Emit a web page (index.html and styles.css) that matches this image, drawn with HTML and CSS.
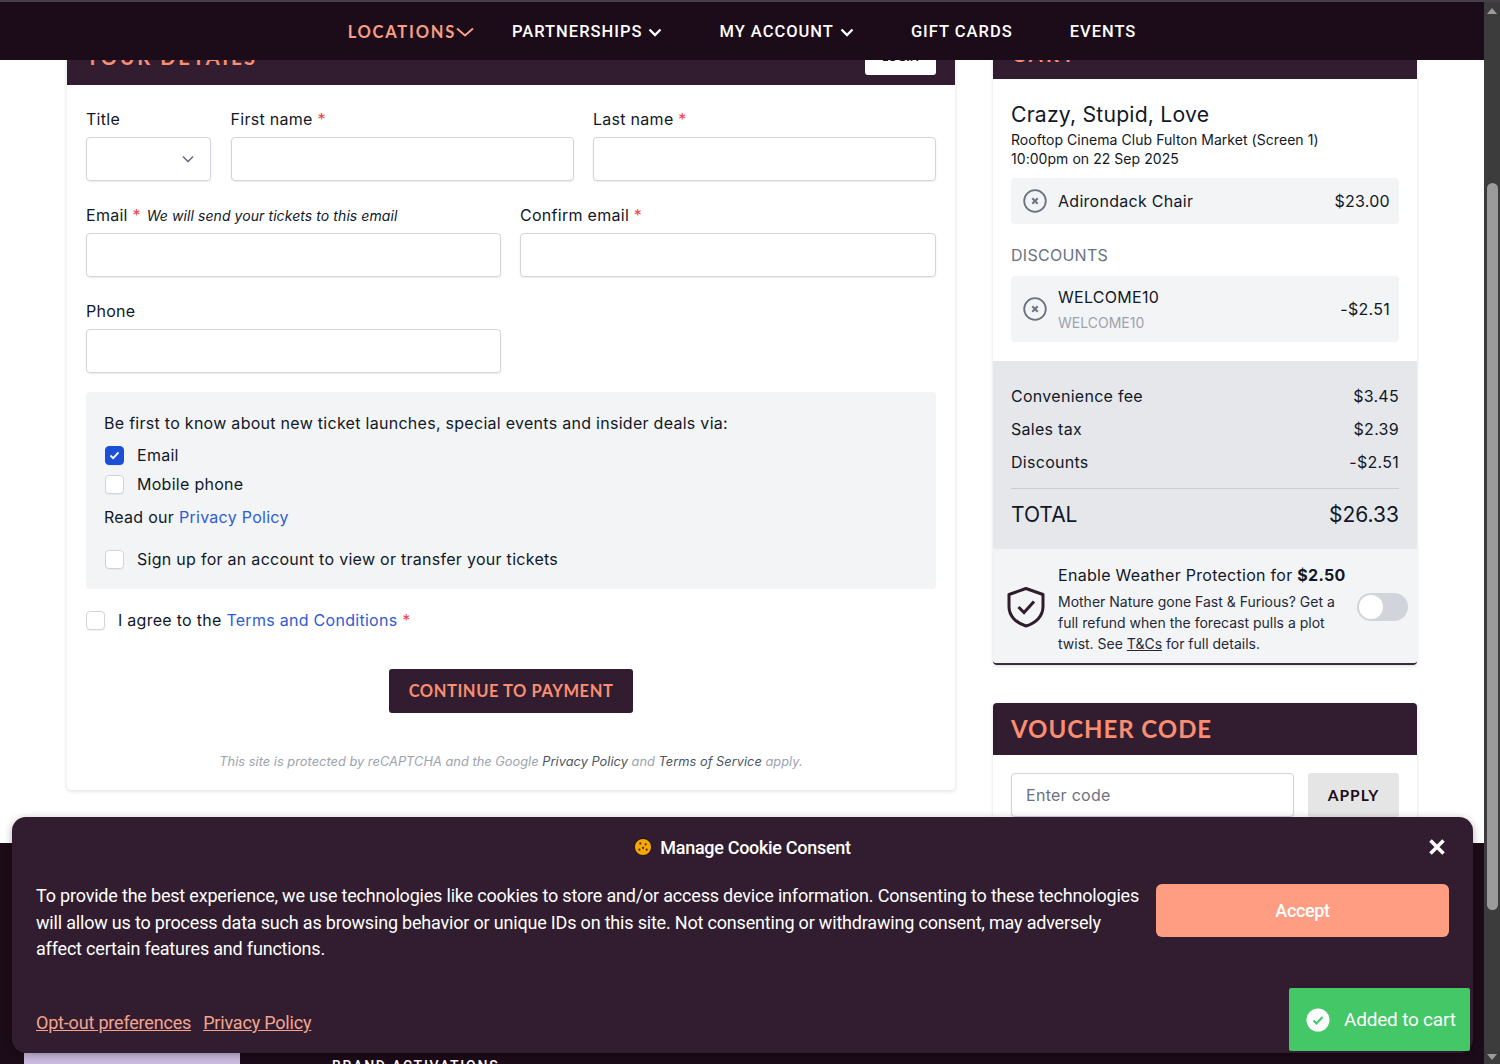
FILE: index.html
```html
<!DOCTYPE html>
<html lang="en">
<head>
<meta charset="utf-8">
<title>Checkout</title>
<link rel="stylesheet" href="styles.css">
</head>
<body>
<div class="viewport">
  <div class="page">
    <nav class="nav">
      <a class="nav-item nav-loc">LOCATIONS<svg class="chev-loc" viewBox="0 0 18 10" width="18" height="10"><path d="M1 1.500l8 7 8-7" fill="none" stroke="currentColor" stroke-width="2"/></svg></a>
      <a class="nav-item nav-part">PARTNERSHIPS<svg class="chev" viewBox="0 0 14 9" width="14" height="9"><path d="M1.500 1.500L7 7l5.500-5.500" fill="none" stroke="currentColor" stroke-width="2.400"/></svg></a>
      <a class="nav-item nav-acc">MY ACCOUNT<svg class="chev" viewBox="0 0 14 9" width="14" height="9"><path d="M1.500 1.500L7 7l5.500-5.500" fill="none" stroke="currentColor" stroke-width="2.400"/></svg></a>
      <a class="nav-item nav-gift">GIFT CARDS</a>
      <a class="nav-item">EVENTS</a>
    </nav>
    <main class="main">
      <section class="details">
        <header class="bar bar-details">
          <h2 class="bar-title bar-small">YOUR DETAILS</h2>
          <button class="login">LOGIN</button>
        </header>
        <form class="form">
          <div class="row row-names">
            <label class="field"><span class="label">Title</span><span class="select"><svg viewBox="0 0 12 8" width="12" height="8"><path d="M1 1.500l5 5 5-5" fill="none" stroke="#6b7280" stroke-width="1.600"/></svg></span></label>
            <label class="field"><span class="label">First name <em class="req">*</em></span><input class="input"></label>
            <label class="field"><span class="label">Last name <em class="req">*</em></span><input class="input"></label>
          </div>
          <div class="row row-two">
            <label class="field"><span class="label">Email <em class="req">*</em> <i class="hint">We will send your tickets to this email</i></span><input class="input"></label>
            <label class="field"><span class="label">Confirm email <em class="req">*</em></span><input class="input"></label>
          </div>
          <div class="row row-two">
            <label class="field"><span class="label">Phone</span><input class="input"></label>
          </div>
          <div class="consent">
            <p class="consent-lead">Be first to know about new ticket launches, special events and insider deals via:</p>
            <div class="check check-email"><span class="box box-on"><svg viewBox="0 0 12 10" width="11" height="9"><path d="M1.500 5l3 3 6-6.500" fill="none" stroke="#fff" stroke-width="2"/></svg></span>Email</div>
            <div class="check check-phone"><span class="box"></span>Mobile phone</div>
            <p class="read">Read our <a class="link">Privacy Policy</a></p>
            <div class="check check-sign"><span class="box"></span>Sign up for an account to view or transfer your tickets</div>
          </div>
          <div class="check terms"><span class="box"></span>I agree to the&nbsp;<a class="link">Terms and Conditions</a>&nbsp;<em class="req">*</em></div>
          <button class="continue" type="button">CONTINUE TO PAYMENT</button>
          <p class="captcha">This site is protected by reCAPTCHA and the Google <b>Privacy Policy</b> and <b>Terms of Service</b> apply.</p>
        </form>
      </section>
      <aside class="side">
        <section class="cart">
          <header class="bar"><h2 class="bar-title bar-small bar-cart">CART</h2></header>
          <div class="cart-body">
            <h3 class="film">Crazy, Stupid, Love</h3>
            <p class="venue">Rooftop Cinema Club Fulton Market (Screen 1)<br>10:00pm on 22 Sep 2025</p>
            <div class="line line-item">
              <svg class="remove" viewBox="0 0 24 24" width="24" height="24"><circle cx="12" cy="12" r="10.800" fill="none" stroke="#6b7280" stroke-width="1.800"/><path d="M9.300 9.300l5.400 5.400m0-5.400l-5.400 5.400" stroke="#6b7280" stroke-width="2"/></svg>
              <span class="line-name">Adirondack Chair</span><span>$23.00</span>
            </div>
            <h4 class="disc-title">DISCOUNTS</h4>
            <div class="line line-disc">
              <svg class="remove" viewBox="0 0 24 24" width="24" height="24"><circle cx="12" cy="12" r="10.800" fill="none" stroke="#6b7280" stroke-width="1.800"/><path d="M9.300 9.300l5.400 5.400m0-5.400l-5.400 5.400" stroke="#6b7280" stroke-width="2"/></svg>
              <span class="line-name line-name-disc">WELCOME10<small class="code">WELCOME10</small></span><span>-$2.51</span>
            </div>
          </div>
          <div class="summary">
            <div class="sum-row"><span>Convenience fee</span><span>$3.45</span></div>
            <div class="sum-row"><span>Sales tax</span><span>$2.39</span></div>
            <div class="sum-row"><span>Discounts</span><span>-$2.51</span></div>
            <div class="sum-total"><span>TOTAL</span><span class="total-val">$26.33</span></div>
          </div>
          <div class="weather">
            <svg class="shield" viewBox="0 0 40 42" width="40" height="42"><path d="M20 2.500l17 6v12c0 9.500-7 16.500-17 19.500C10 37 3 30 3 20.500v-12z" fill="none" stroke="#2f1c2d" stroke-width="3" stroke-linejoin="round"/><path d="M12.500 21l5.500 5.500 10-11" fill="none" stroke="#2f1c2d" stroke-width="3"/></svg>
            <div class="weather-text">
              <p class="weather-head">Enable Weather Protection for <b>$2.50</b></p>
              <p class="weather-copy">Mother Nature gone Fast &amp; Furious? Get a full refund when the forecast pulls a plot twist. See <u>T&amp;Cs</u> for full details.</p>
            </div>
            <span class="toggle"><span class="knob"></span></span>
          </div>
        </section>
        <section class="voucher">
          <header class="bar bar-voucher"><h2 class="bar-title">VOUCHER CODE</h2></header>
          <div class="voucher-body">
            <input class="input voucher-input" placeholder="Enter code">
            <button class="apply" type="button">APPLY</button>
          </div>
        </section>
      </aside>
    </main>
    <footer class="footer">
      <div class="foot-block"></div>
      <div class="foot-link">BRAND ACTIVATIONS</div>
    </footer>
    <div class="cookie">
      <div class="cookie-head">
        <svg viewBox="0 0 20 20" width="18" height="18"><circle cx="10" cy="10" r="9.500" fill="#f5a800" stroke="#1c0b18" stroke-width="1"/><g fill="#4a2a10"><circle cx="7" cy="6" r="1.200"/><circle cx="13" cy="7" r="1.200"/><circle cx="10" cy="11" r="1.200"/><circle cx="6" cy="13" r="1.200"/><circle cx="14" cy="13" r="1.200"/></g></svg>
        <span>Manage Cookie Consent</span>
        <svg class="cookie-close" viewBox="0 0 18 18" width="18" height="18"><path d="M2.500 2.500l13 13m0-13l-13 13" stroke="#fff" stroke-width="3.600"/></svg>
      </div>
      <div class="cookie-mid">
        <p class="cookie-text">To provide the best experience, we use technologies like cookies to store and/or access device information. Consenting to these technologies will allow us to process data such as browsing behavior or unique IDs on this site. Not consenting or withdrawing consent, may adversely affect certain features and functions.</p>
        <button class="accept" type="button">Accept</button>
      </div>
      <div class="cookie-links"><a>Opt-out preferences</a><a>Privacy Policy</a></div>
    </div>
    <div class="toast">
      <svg viewBox="0 0 24 24" width="24" height="24"><circle cx="12" cy="12" r="11.500" fill="#fff"/><path d="M7.500 12.500l3 3 6-6.500" fill="none" stroke="#43c767" stroke-width="2"/></svg>
      <span>Added to cart</span>
    </div>
  </div>
  <div class="scrollbar">
    <span class="arrow-up"></span>
    <span class="thumb"></span>
    <span class="arrow-down"></span>
  </div>
</div>
</body>
</html>
```
FILE: styles.css
```css
* { box-sizing: border-box; }
html, body { margin: 0; height: 100%; overflow: hidden; }
body { font-family: Inter, "Liberation Sans", sans-serif; color: #111827; background: #fff; font-size: 16px; letter-spacing: .28px; }
p, h2, h3, h4 { margin: 0; font-weight: 400; }
em, i { font-style: normal; }
.viewport { display: flex; width: 1500px; height: 1064px; overflow: hidden; }
.page { position: relative; width: 1484px; height: 1064px; overflow: hidden; background: #fff; }

.nav { position: absolute; top: 0; left: 0; right: 0; height: 60px; z-index: 5; background: #1c0b18; border-top: 2px solid #45404a; display: flex; align-items: center; justify-content: center; padding-top: 2px; font: 500 16.500px/24px Roboto, sans-serif; letter-spacing: 1px; color: #fff; }
.nav-item { display: flex; align-items: center; margin-left: 57px; white-space: nowrap; }
.nav-item:first-child { margin-left: 0; }
.nav-loc { color: #f79f86; font-family: Lato, sans-serif; font-weight: 700; letter-spacing: 1.750px; }
.nav-part { margin-left: 38px; }
.chev { margin-left: 6px; }
.chev-loc { margin-left: 0; }

.main { display: flex; align-items: flex-start; gap: 38px; padding: 27px 67px 0; height: 843px; }
.bar { background: #311d2f; height: 52px; display: flex; align-items: center; justify-content: space-between; padding: 0 18px; }
.bar-title { font: 700 24px/1 Lato, sans-serif; letter-spacing: .95px; color: #fb8e72; }
.bar-small { font-size: 20px; letter-spacing: 2.700px; padding-bottom: 5px; margin-left: 1px; }
.bar-cart { padding: 2px 0 0; letter-spacing: 3.500px; }
.details { width: 888px; margin-top: 6px; background: #fff; box-shadow: 0 1px 4px rgba(0,0,0,.14); border-radius: 0 0 4px 4px; }
.login { width: 71px; height: 34px; border: 0; border-radius: 3px; background: #fff; font: 700 12px Lato, sans-serif; color: #111; padding: 0 0 3px; margin: 8px 1px 2px 0; align-self: flex-start; }
.form { padding: 22px 19px 0; height: 705px; display: flex; flex-direction: column; }
.row { display: grid; gap: 19px; margin-bottom: 22px; }
.row-names { grid-template-columns: 125.500px 343.500px 343px; }
.row-two { grid-template-columns: 415px 416px; }
.field { display: flex; flex-direction: column; gap: 6px; }
.label { height: 24px; font-size: 16px; line-height: 24px; color: #111827; white-space: nowrap; }
.req { color: #ef4444; }
.hint { font-style: italic; font-size: 14px; letter-spacing: .08px; margin-left: 1px; }
.input, .select { width: 100%; height: 44px; border: 1px solid #d1d5db; border-radius: 4px; background: #fff; box-shadow: 0 1px 2px rgba(0,0,0,.08); font: 16px Inter, sans-serif; letter-spacing: .28px; padding: 0 14px; outline: 0; }
.select { width: 125px; display: flex; align-items: center; justify-content: flex-end; padding-right: 16px; }
.consent { margin-top: -3px; width: 850px; height: 197px; background: #f3f4f6; border-radius: 4px; padding: 19px 18px 0; }
.consent-lead { line-height: 24px; }
.check { display: flex; align-items: center; height: 24px; line-height: 24px; }
.box { width: 19px; height: 19px; border: 1px solid #d1d5db; background: #fff; border-radius: 4px; margin-right: 13px; flex: none; display: flex; align-items: center; justify-content: center; box-shadow: 0 1px 1px rgba(0,0,0,.05); }
.consent .box { margin-left: 1px; }
.box-on { background: #1d4ed8; border-color: #1d4ed8; }
.check-email { margin-top: 8px; }
.check-phone { margin-top: 5px; }
.read { margin-top: 9px; line-height: 24px; }
.link { color: #2f5bd8; }
.check-sign { margin-top: 18px; }
.terms { margin-top: 19px; }
.continue { align-self: center; margin-top: 37px; width: 244px; height: 44px; border: 0; border-radius: 3px; background: #311d2f; color: #fb8e72; font: 700 16.500px Lato, sans-serif; letter-spacing: .55px; }
.captcha { margin-top: 40px; text-align: center; font-size: 12.800px; line-height: 18px; font-style: italic; color: #9ca3af; letter-spacing: .03px; }
.captcha b { font-weight: 400; color: #4b5563; }

.side { width: 424px; }
.cart { background: #fff; box-shadow: 0 1px 3px rgba(0,0,0,.14); }
.cart-body { padding: 22px 18px 19px; }
.film { font-size: 21.200px; line-height: 26px; letter-spacing: .2px; }
.venue { font-size: 14px; line-height: 18.500px; margin-top: 4px; letter-spacing: .05px; }
.line { display: flex; align-items: center; background: #f3f4f6; border-radius: 4px; padding: 0 9px 0 12px; }
.line-item { height: 46px; margin-top: 10px; }
.line-disc { height: 66px; }
.remove { flex: none; margin-right: 11px; }
.line-name { flex: 1; }
.line-name-disc { padding-top: 2px; }
.code { display: block; font-size: 14px; line-height: 20px; color: #9ca3af; margin-top: 6px; letter-spacing: 0; }
.disc-title { font-size: 16px; line-height: 24px; color: #6b7280; margin: 19px 0 9px; }
.summary { background: #e5e7eb; height: 188px; padding: 19px 18px 0; }
.sum-row { display: flex; justify-content: space-between; height: 33px; line-height: 33px; font-size: 16px; }
.sum-total { display: flex; justify-content: space-between; margin-top: 9px; border-top: 1px solid #c9ccd2; padding-top: 12px; font-size: 21px; line-height: 28px; letter-spacing: 0; }
.weather { display: flex; align-items: center; height: 116px; background: #f3f4f6; border-bottom: 2px solid #3b2a39; padding: 2px 9px 0 13px; border-radius: 0 0 4px 4px; }
.shield { flex: none; margin: 0 12px 0 0; }
.weather-text { width: 285px; flex: none; padding-top: 2px; }
.weather-head { font-size: 16px; line-height: 24px; white-space: nowrap; }
.weather-head b { font-weight: 700; }
.weather-copy { font-size: 14px; line-height: 21px; color: #1f2937; margin-top: 4px; letter-spacing: 0; }
.toggle { width: 51px; height: 28px; border-radius: 14px; background: #d1d5db; margin-left: 14px; padding: 2px; flex: none; }
.knob { display: block; width: 24px; height: 24px; border-radius: 50%; background: #fff; }
.voucher { margin-top: 38px; background: #fff; box-shadow: 0 1px 3px rgba(0,0,0,.14); }
.bar-voucher { border-radius: 4px 4px 0 0; }
.voucher-body { display: flex; gap: 14px; padding: 18px; }
.voucher-input { width: 283px; }
.voucher-input::placeholder { color: #6b7280; }
.apply { width: 91px; height: 44px; border: 0; border-radius: 3px; background: #e5e5e5; color: #1c0b18; font: 700 15.500px Lato, sans-serif; letter-spacing: 1px; }

.footer { position: relative; height: 221px; background: #1c0b18; padding: 210px 0 0 24px; display: flex; }
.foot-block { width: 216px; height: 11px; background: #cbbbe0; flex: none; }
.foot-link { margin: 4px 0 0 92px; font: 500 14px/18px Roboto, sans-serif; letter-spacing: 1.750px; color: #fff; }

.cookie { position: absolute; z-index: 6; left: 12px; top: 817px; width: 1461px; height: 236px; border-radius: 14px; background: #311d2f; box-shadow: 0 2px 8px rgba(0,0,0,.3); color: #fff; font-family: Roboto, sans-serif; padding: 18px 24px 0; letter-spacing: -.19px; }
.cookie-head { position: relative; display: flex; align-items: center; justify-content: center; gap: 8px; height: 24px; font-size: 18px; font-weight: 500; letter-spacing: -.3px; }
.cookie-close { position: absolute; right: 3px; top: 3px; }
.cookie-mid { display: flex; align-items: flex-start; gap: 16px; margin-top: 25px; }
.cookie-text { width: 1104px; flex: none; font-size: 18px; line-height: 26.500px; margin-top: -1px; }
.accept { width: 293px; height: 53px; border: 0; border-radius: 6px; background: #ff9d82; color: #fff; font: 500 18px Roboto, sans-serif; letter-spacing: -.35px; }
.cookie-links { position: absolute; left: 24px; top: 194px; display: flex; gap: 12px; font-size: 18px; line-height: 24px; color: #f3a48e; text-decoration: underline; }
.toast { position: absolute; z-index: 7; left: 1289px; top: 988px; width: 181px; height: 63px; background: #43c767; border-radius: 2px; color: #fff; display: flex; align-items: center; gap: 14px; padding-left: 17px; font: 400 19px Roboto, sans-serif; letter-spacing: -.2px; white-space: nowrap; }

.scrollbar { width: 16px; height: 1064px; background: #3c3c3c; position: relative; border-top: 2px solid #45404a; }
.thumb { position: absolute; left: 3px; top: 181px; width: 11px; height: 727px; border-radius: 6px; background: #9b9b9b; }
.arrow-up { position: absolute; top: 6px; left: 3px; border: 5px solid transparent; border-top: 0; border-bottom: 6px solid #9b9b9b; }
.arrow-down { position: absolute; bottom: 4px; left: 3px; border: 5px solid transparent; border-bottom: 0; border-top: 6px solid #9b9b9b; }
```
